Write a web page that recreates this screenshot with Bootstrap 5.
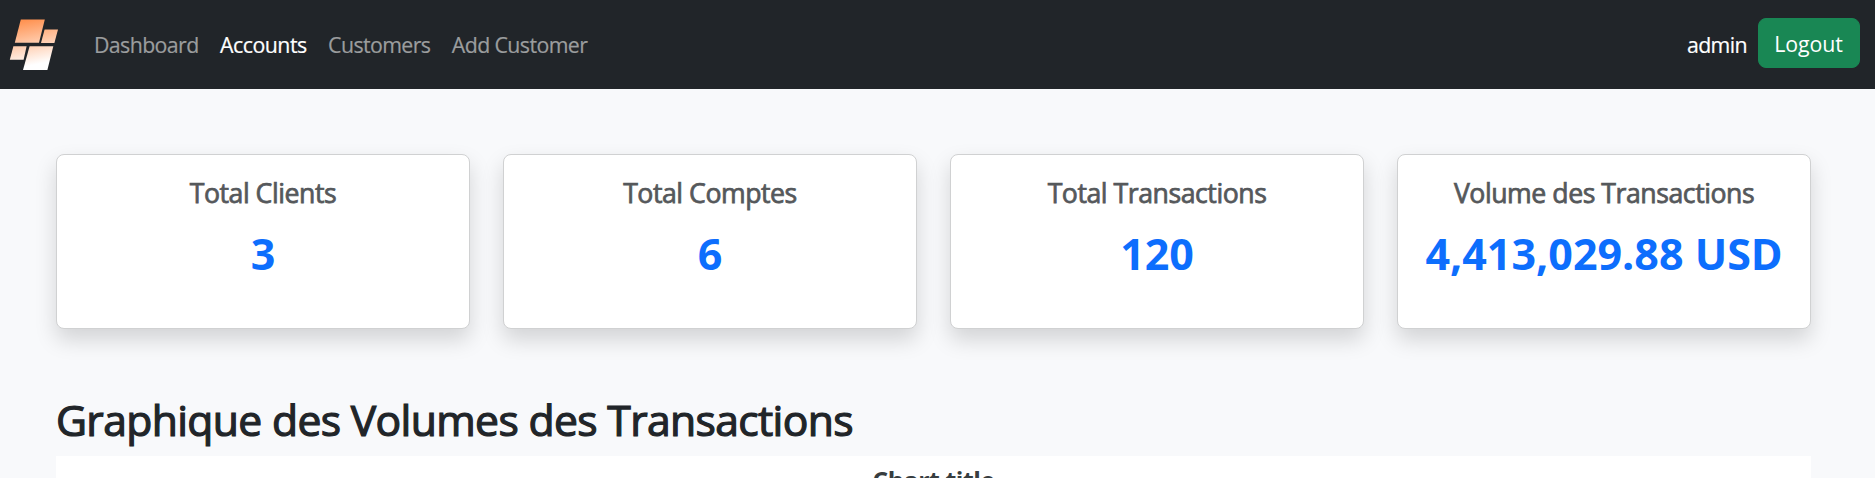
<!DOCTYPE html>
<html lang="fr">
<head>
<meta charset="utf-8">
<meta name="viewport" content="width=device-width, initial-scale=1">
<title>Dashboard</title>
<link href="https://cdn.jsdelivr.net/npm/bootstrap@5.3.0/dist/css/bootstrap.min.css" rel="stylesheet">
<style>
body { font-family: "Open Sans", sans-serif; font-size: 21.33px; line-height: 32px; height: 100vh; background: #f8f9fb; overflow: hidden; border-right: 1px solid #fff; }
.topbar { height: 89px; padding: 0 15.5px 0 0; background: #212529; }
.logo { width: 70px; height: 89px; }
.topbar .nav-link { padding: 0 10.7px; letter-spacing: -.6px; color: #9b9d9e; -webkit-text-stroke: .2px; }
.topbar .nav-link.active { color: #fff; letter-spacing: -.5px; }
.main-links { padding-left: 13.3px; }
.user-name { color: #fff; letter-spacing: -.6px; margin-right: 10.5px; -webkit-text-stroke: .2px; }
.btn-logout { height: 50px; width: 102px; padding: 1px 0 0; margin-bottom: 3px; border-radius: 8px; font-size: 21.33px; line-height: 48px; letter-spacing: -.1px; }
.dash { padding: 65px 64px 0 56px; }
.stats { display: grid; grid-template-columns: repeat(4, 1fr); gap: 33.2px; }
.stat-card { height: 175px; border-radius: 8px; border-color: #d0d1d2; box-shadow: 0 10.7px 21.3px rgba(0,0,0,.15); }
.stat-card .card-body { padding: 21.5px 10px 0; }
.stat-title { font-size: 26.67px; line-height: 32px; font-weight: 500; letter-spacing: -.46px; color: #55585b; margin-bottom: 19px; -webkit-text-stroke: .75px; }
.stat-value { font-size: 43px; line-height: 52px; font-weight: 700; color: #0d6efd; white-space: nowrap; margin: 0; }
.section-title { font-size: 42.67px; line-height: 51px; font-weight: 500; letter-spacing: -.65px; color: #212529; margin: 65px 0 11px; -webkit-text-stroke: 1.2px; }
.chart-box { height: 22px; padding-top: 7px; overflow: hidden; }
.chart-title { font-size: 25px; line-height: 34px; font-weight: 700; letter-spacing: -.5px; color: #373d3f; }
</style>
</head>
<body>
<nav class="topbar d-flex align-items-center">
  <svg class="logo" viewBox="0 0 70 89" aria-hidden="true">
    <defs>
      <linearGradient id="flame" gradientUnits="userSpaceOnUse" x1="29" y1="18" x2="38" y2="64">
        <stop offset="0" stop-color="#ff8f4c"/><stop offset="1" stop-color="#fff"/>
      </linearGradient>
    </defs>
    <g fill="url(#flame)">
      <path d="M20.8 19.4H44.8L39 42.8H14.8Z"/>
      <path d="M44.6 29.5H58L54.4 42.9H41Z"/>
      <path d="M13.4 46.3H26.6L23.6 59.7H9.8Z"/>
      <path d="M29.6 46.3H53.3L47.4 70H23Z"/>
    </g>
  </svg>
  <div class="nav main-links">
    <a class="nav-link" href="#">Dashboard</a>
    <a class="nav-link active" href="#">Accounts</a>
    <a class="nav-link" href="#">Customers</a>
    <a class="nav-link" href="#">Add Customer</a>
  </div>
  <span class="user-name ms-auto">admin</span>
  <button class="btn btn-success btn-logout" type="button">Logout</button>
</nav>
<main class="dash">
  <div class="stats text-center">
    <div class="card stat-card"><div class="card-body"><h5 class="stat-title">Total Clients</h5><p class="stat-value">3</p></div></div>
    <div class="card stat-card"><div class="card-body"><h5 class="stat-title">Total Comptes</h5><p class="stat-value">6</p></div></div>
    <div class="card stat-card"><div class="card-body"><h5 class="stat-title">Total Transactions</h5><p class="stat-value">120</p></div></div>
    <div class="card stat-card"><div class="card-body"><h5 class="stat-title">Volume des Transactions</h5><p class="stat-value">4,413,029.88 USD</p></div></div>
  </div>
  <h2 class="section-title">Graphique des Volumes des Transactions</h2>
  <div class="chart-box bg-white text-center"><div class="chart-title">Chart title</div></div>
</main>
<script src="https://cdn.jsdelivr.net/npm/bootstrap@5.3.0/dist/js/bootstrap.bundle.min.js"></script>
</body>
</html>
